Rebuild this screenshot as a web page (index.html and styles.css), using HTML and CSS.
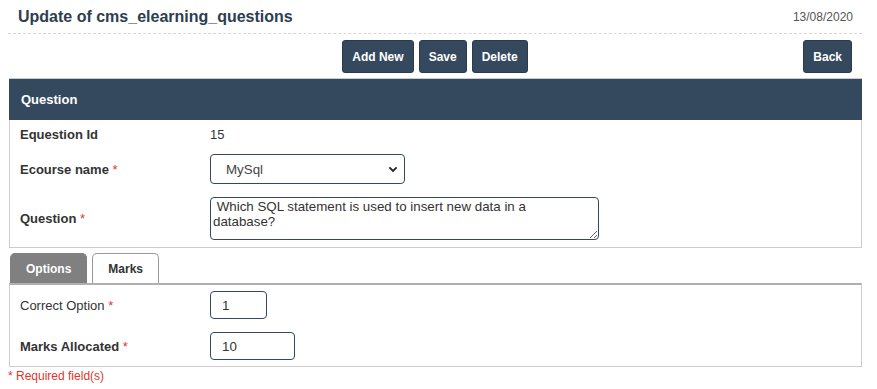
FILE: index.html
```html
<!DOCTYPE html>
<html lang="en">
<head>
    <meta charset="UTF-8">
    <meta name="viewport" content="width=device-width, initial-scale=1.0">
    <title>Update of cms_elearning_questions</title>
    <link rel="stylesheet" href="styles.css">
</head>
<body>
    <div class="page">
        <div class="page-header">
            <h1 class="page-title">Update of cms_elearning_questions</h1>
            <span class="page-date">13/08/2020</span>
        </div>

        <div class="toolbar">
            <div class="toolbar-spacer"></div>
            <div class="toolbar-group">
                <button class="btn">Add New</button>
                <button class="btn">Save</button>
                <button class="btn">Delete</button>
            </div>
            <div class="toolbar-end">
                <button class="btn">Back</button>
            </div>
        </div>

        <div class="panel">
            <div class="panel-header">Question</div>
            <div class="panel-body">
                <div class="form-row row-id">
                    <label class="form-label bold">Equestion Id</label>
                    <span class="form-value">15</span>
                </div>
                <div class="form-row row-select">
                    <label class="form-label bold" for="ecourse">Ecourse name <span class="req">*</span></label>
                    <div class="select-wrap">
                        <select id="ecourse" class="form-select">
                            <option>MySql</option>
                        </select>
                        <svg class="select-arrow" width="10" height="7" viewBox="0 0 10 7">
                            <path d="M1.4 1.4 L5 5 L8.6 1.4" fill="none" stroke="#222" stroke-width="1.8"/>
                        </svg>
                    </div>
                </div>
                <div class="form-row row-text">
                    <label class="form-label bold" for="question">Question <span class="req">*</span></label>
                    <textarea id="question" class="form-textarea"> Which SQL statement is used to insert new data in a
database?</textarea>
                </div>
            </div>
        </div>

        <div class="tabs">
            <div class="tab active">Options</div>
            <div class="tab">Marks</div>
        </div>
        <div class="tab-content">
            <div class="form-row">
                <label class="form-label" for="correct">Correct Option <span class="req">*</span></label>
                <input type="text" id="correct" class="form-input input-small" value="1">
            </div>
            <div class="form-row">
                <label class="form-label bold" for="marks">Marks Allocated <span class="req">*</span></label>
                <input type="text" id="marks" class="form-input input-medium" value="10">
            </div>
        </div>

        <div class="required-note">* Required field(s)</div>
    </div>
</body>
</html>
```

FILE: styles.css
```css
* {
    margin: 0;
    padding: 0;
    box-sizing: border-box;
}

body {
    font-family: 'Liberation Sans', Arial, sans-serif;
    font-size: 13px;
    color: #333333;
    background-color: #ffffff;
    padding: 0 8px;
}

.page {
    width: 854px;
}

/* hlavicka */
.page-header {
    display: flex;
    justify-content: space-between;
    align-items: center;
    height: 34px;
    padding: 0 9px 0 10px;
    border-bottom: 1px dashed #d6d6d6;
}

.page-title {
    font-size: 16px;
    font-weight: bold;
    color: #2c3e50;
    line-height: 19px;
}

.page-date {
    font-size: 12px;
    color: #555555;
    line-height: 14px;
}

/* tlacitka */
.toolbar {
    display: grid;
    grid-template-columns: 1fr auto 1fr;
    align-items: center;
    padding: 6px 10px 5px 10px;
}

.toolbar-group {
    display: flex;
    gap: 5px;
}

.toolbar-end {
    display: flex;
    justify-content: flex-end;
}

.btn {
    height: 33px;
    padding: 0 9px;
    background-color: #34495e;
    color: #ffffff;
    border: 1px solid #2a3b4c;
    border-radius: 3px;
    font-family: 'Liberation Sans', Arial, sans-serif;
    font-size: 12px;
    font-weight: bold;
    cursor: pointer;
}

.btn:hover {
    background-color: #2c3e50;
}

/* panel */
.panel {
    margin-left: 1px;
    border: 1px solid #cccccc;
}

.panel-header {
    height: 41px;
    display: flex;
    align-items: center;
    padding-left: 12px;
    margin: 0 -1px;
    background-color: #34495e;
    color: #ffffff;
    font-weight: bold;
    font-size: 13px;
}

.panel-body {
    padding: 0 10px 7px 10px;
}

.form-row {
    display: flex;
    align-items: center;
}

.row-id {
    height: 28px;
    padding-top: 1px;
}

.row-select {
    margin-top: 6px;
}

.row-text {
    margin-top: 13px;
}

.form-label {
    width: 190px;
    flex-shrink: 0;
    color: #333333;
}

.form-label.bold {
    font-weight: bold;
}

.req {
    color: #e3342f;
    font-weight: normal;
}

.form-value {
    color: #333333;
}

.select-wrap {
    position: relative;
    width: 195px;
}

.form-select {
    appearance: none;
    -webkit-appearance: none;
    width: 195px;
    height: 30px;
    padding-left: 15px;
    border: 1px solid #34495e;
    border-radius: 4px;
    background-color: #ffffff;
    font-family: 'Liberation Sans', Arial, sans-serif;
    font-size: 13.33px;
    color: #444444;
}

.select-arrow {
    position: absolute;
    right: 7px;
    top: 12px;
    pointer-events: none;
}

.form-textarea {
    width: 389px;
    height: 43px;
    padding: 1px 2px;
    border: 1px solid #34495e;
    border-radius: 4px;
    font-family: 'Liberation Sans', Arial, sans-serif;
    font-size: 13.33px;
    line-height: 15px;
    color: #333333;
    overflow: hidden;
}

/* zalozky */
.tabs {
    display: flex;
    gap: 5px;
    margin-top: 5px;
    margin-left: 2px;
}

.tab {
    height: 30px;
    display: flex;
    align-items: center;
    padding: 0 15px;
    border: 1px solid #999999;
    border-bottom: none;
    border-radius: 5px 5px 0 0;
    font-size: 12px;
    font-weight: bold;
    color: #333333;
    background-color: #ffffff;
}

.tab.active {
    background-color: #808080;
    border-color: #808080;
    color: #ffffff;
}

.tab-content {
    margin-left: 1px;
    border: 1px solid #cccccc;
    border-top: 2px solid #b0b0b0;
    padding: 6px 10px 6px 10px;
    display: flex;
    flex-direction: column;
    gap: 13px;
}

.form-input {
    height: 28px;
    padding: 0 11px;
    border: 1px solid #34495e;
    border-radius: 4px;
    font-family: 'Liberation Sans', Arial, sans-serif;
    font-size: 13.33px;
    color: #333333;
}

.input-small {
    width: 57px;
}

.input-medium {
    width: 85px;
}

.required-note {
    margin-top: 2px;
    font-size: 12px;
    color: #e3342f;
}
```
